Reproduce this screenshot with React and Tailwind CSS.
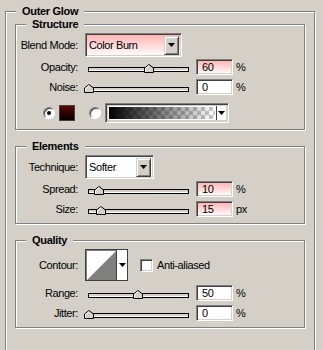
import React from "react";

const sunken =
  "border border-t-[#808080] border-l-[#808080] border-r-white border-b-white shadow-[inset_1px_1px_0_#404040,inset_-1px_-1px_0_#d4d0c8]";
const raised =
  "border border-t-[#d4d0c8] border-l-[#d4d0c8] border-r-[#404040] border-b-[#404040] shadow-[inset_1px_1px_0_#fff,inset_-1px_-1px_0_#808080]";

function Group({ title, className, children }) {
  return (
    <div
      className={`relative border border-[#808080] shadow-[inset_1px_1px_0_#fff,1px_1px_0_#fff] ${className}`}
    >
      <span className="absolute left-[10px] top-[-8px] bg-[#d4d0c8] px-[6px] text-[11px] font-bold leading-[14px] tracking-[-0.3px]">
        {title}
      </span>
      {children}
    </div>
  );
}

function Arrow() {
  return (
    <svg width="7" height="4" viewBox="0 0 7 4">
      <path d="M0 0H7L3.5 4Z" fill="#000" />
    </svg>
  );
}

function Label({ children }) {
  return (
    <div className="w-[69px] shrink-0 pr-[7px] text-right leading-[14px]">
      {children}
    </div>
  );
}

function Thumb({ left }) {
  return (
    <svg
      className="absolute top-[5px]"
      style={{ left }}
      width="10"
      height="9"
      viewBox="0 0 10 9"
    >
      <path d="M0.5 8.5V4L5 0.5L9.5 4V8.5Z" fill="#d4d0c8" stroke="#000" />
      <path d="M1.5 7.5V4.3L5 1.6" fill="none" stroke="#fff" />
    </svg>
  );
}

function SliderRow({ label, thumb, value, unit, pink, className }) {
  return (
    <div className={`flex h-[16px] items-center ${className}`}>
      <Label>{label}</Label>
      <div className="relative ml-[3px] h-[16px] w-[101px]">
        <div className="absolute left-0 top-[8px] h-[5px] w-[101px] border border-black bg-[#d4d0c8] shadow-[inset_0_-1px_0_#fff]" />
        <Thumb left={thumb} />
      </div>
      <div
        className={`ml-[7px] flex h-[16px] w-[37px] items-center pl-[5px] leading-[14px] ${sunken} ${
          pink ? "bg-linear-to-b from-[#ffb0b0] to-white" : "bg-white"
        }`}
      >
        {value}
      </div>
      <span className="ml-[3px] leading-[14px]">{unit}</span>
    </div>
  );
}

function Combo({ text, width, pink, className }) {
  return (
    <div
      className={`flex h-[24px] items-center p-[2px] ${sunken} ${width} ${
        pink ? "bg-linear-to-b from-[#ffb0b0] to-white" : "bg-white"
      } ${className}`}
    >
      <span className="flex-1 pl-[1px] leading-[14px]">{text}</span>
      <div
        className={`flex h-[19px] w-[15px] items-center justify-center bg-[#d4d0c8] ${raised}`}
      >
        <Arrow />
      </div>
    </div>
  );
}

function Radio({ checked }) {
  return (
    <div className="flex h-[12px] w-[12px] items-center justify-center rounded-full border border-t-[#808080] border-l-[#808080] border-r-white border-b-white bg-white shadow-[inset_1px_1px_0_#404040]">
      {checked && <div className="h-[4px] w-[4px] rounded-full bg-black" />}
    </div>
  );
}

export default function App() {
  return (
    <div className="h-[350px] w-[323px] overflow-hidden bg-[#d4d0c8] pl-[5px] pt-[11px] font-['Liberation_Sans',Arial,sans-serif] text-[11px] tracking-[-0.4px] text-black">
      <Group title="Outer Glow" className="h-[360px] w-[310px] px-[9px] pt-[12px]">
        <Group title="Structure" className="h-[106px] w-[290px]">
          <div className="mt-[8px] flex items-center">
            <Label>Blend Mode:</Label>
            <Combo text="Color Burn" width="w-[97px]" pink />
          </div>
          <SliderRow label="Opacity:" thumb={56} value="60" unit="%" pink className="mt-[2px]" />
          <SliderRow label="Noise:" thumb={-4} value="0" unit="%" className="mt-[4px]" />
          <div className="mt-[8px] flex h-[20px] items-center">
            <div className="ml-[27px]">
              <Radio checked />
            </div>
            <div className="ml-[4px] h-[16px] w-[16px] border border-[#404040] bg-linear-to-b from-[#5a0808] to-[#080000]" />
            <div className="ml-[14px]">
              <Radio />
            </div>
            <div className={`ml-[4px] flex h-[20px] w-[124px] p-[2px] ${sunken} bg-[#d4d0c8]`}>
              <div className="h-full flex-1 border border-white bg-[repeating-conic-gradient(#c8c8c8_0_25%,#fff_0_50%)] bg-[length:8px_8px]">
                <div className="h-full w-full bg-linear-to-r from-black to-transparent" />
              </div>
              <div className="flex w-[10px] items-center justify-center border-l border-[#404040] bg-white">
                <Arrow />
              </div>
            </div>
          </div>
        </Group>

        <Group title="Elements" className="mt-[16px] h-[78px] w-[290px]">
          <div className="mt-[8px] flex items-center">
            <Label>Technique:</Label>
            <Combo text="Softer" width="w-[69px]" />
          </div>
          <SliderRow label="Spread:" thumb={6} value="10" unit="%" pink className="mt-[2px]" />
          <SliderRow label="Size:" thumb={8} value="15" unit="px" pink className="mt-[4px]" />
        </Group>

        <Group title="Quality" className="mt-[16px] h-[88px] w-[290px]">
          <div className="mt-[8px] flex h-[32px] items-center">
            <Label>Contour:</Label>
            <div className="flex h-[32px] w-[43px] border border-[#404040] bg-[#d4d0c8] shadow-[inset_1px_1px_0_#808080]">
              <svg className="ml-[1px] mt-[1px]" width="29" height="29" viewBox="0 0 29 29">
                <rect width="29" height="29" fill="#fff" />
                <path d="M0 29L29 0V29Z" fill="#808080" />
              </svg>
              <div className="flex flex-1 items-center justify-center border-l border-[#404040] bg-white">
                <Arrow />
              </div>
            </div>
            <div className={`ml-[12px] h-[13px] w-[13px] bg-white ${sunken}`} />
            <span className="ml-[4px] leading-[14px]">Anti-aliased</span>
          </div>
          <SliderRow label="Range:" thumb={45} value="50" unit="%" className="mt-[4px]" />
          <SliderRow label="Jitter:" thumb={-4} value="0" unit="%" className="mt-[4px]" />
        </Group>
      </Group>
    </div>
  );
}
